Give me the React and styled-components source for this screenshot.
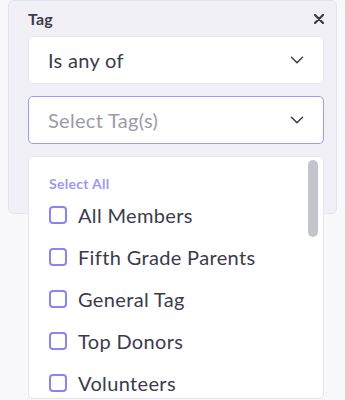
import React from "react";
import styled, { createGlobalStyle } from "styled-components";

const GlobalStyle = createGlobalStyle`
  body {
    margin: 0;
    background: #f8f8fb;
    font-family: Lato, "Open Sans", sans-serif;
  }
`;

const Page = styled.div`
  position: relative;
  height: 400px;
  padding: 0 8px;
  overflow: hidden;
`;

const Panel = styled.div`
  height: 214px;
  box-sizing: border-box;
  background: #f0f0f6;
  border: 1px solid #e3e3eb;
  border-radius: 6px;
  padding: 4px 12px 0 19px;
`;

const Header = styled.div`
  display: flex;
  align-items: center;
  justify-content: space-between;
  height: 27px;
  margin-bottom: 4px;
`;

const Title = styled.span`
  font-size: 16px;
  font-weight: 700;
  color: #3c3c4c;
  letter-spacing: 0.2px;
`;

const Close = styled.button`
  border: none;
  background: none;
  padding: 0;
  display: flex;
  color: #3a3a48;
  cursor: pointer;
`;

const Select = styled.div`
  display: flex;
  align-items: center;
  justify-content: space-between;
  height: 48px;
  box-sizing: border-box;
  width: 296px;
  margin-bottom: 12px;
  padding: 0 19px;
  background: #fff;
  border: ${(p) => (p.$focused ? "1.5px solid #9d99f6" : "1px solid #e5e5ed")};
  border-radius: 5px;
  font-size: 20px;
  letter-spacing: 0.3px;
  color: ${(p) => (p.$placeholder ? "#9b9ba6" : "#3b3b4b")};
`;

const Menu = styled.div`
  position: absolute;
  top: 156px;
  left: 28px;
  width: 296px;
  height: 243px;
  box-sizing: border-box;
  background: #fff;
  border: 1px solid #e5e5ed;
  border-radius: 5px;
  padding: 17px 0 0 20px;
`;

const Thumb = styled.div`
  position: absolute;
  top: 3px;
  right: 5px;
  width: 10px;
  height: 77px;
  border-radius: 5px;
  background: #c4c4cc;
`;

const SelectAll = styled.div`
  font-size: 14px;
  font-weight: 700;
  color: #9a97f4;
  letter-spacing: 0.3px;
  line-height: 20px;
`;

const Option = styled.label`
  display: flex;
  align-items: center;
  gap: 11px;
  height: 42px;
  font-size: 20px;
  letter-spacing: 0.35px;
  color: #3b3b4b;
`;

const Box = styled.span`
  width: 18px;
  height: 18px;
  box-sizing: border-box;
  border: 2px solid #8784f6;
  border-radius: 4px;
  flex-shrink: 0;
`;

const Chevron = () => (
  <svg width="14" height="8" viewBox="0 0 14 8" fill="none">
    <path d="M1.5 1.2l5.5 5.5 5.5-5.5" stroke="#3b3b4b" strokeWidth="1.5" strokeLinecap="round" strokeLinejoin="round" />
  </svg>
);

const CloseIcon = () => (
  <svg width="10" height="10" viewBox="0 0 10 10">
    <path d="M1 1l8 8M9 1l-8 8" stroke="currentColor" strokeWidth="2.2" strokeLinecap="round" />
  </svg>
);

const tags = ["All Members", "Fifth Grade Parents", "General Tag", "Top Donors", "Volunteers"];

export default function App() {
  return (
    <>
      <GlobalStyle />
      <Page>
        <Panel>
          <Header>
            <Title>Tag</Title>
            <Close aria-label="Remove filter">
              <CloseIcon />
            </Close>
          </Header>
          <Select>
            <span>Is any of</span>
            <Chevron />
          </Select>
          <Select $focused $placeholder>
            <span>Select Tag(s)</span>
            <Chevron />
          </Select>
        </Panel>
        <Menu>
          <Thumb />
          <SelectAll>Select All</SelectAll>
          {tags.map((t) => (
            <Option key={t}>
              <Box />
              {t}
            </Option>
          ))}
        </Menu>
      </Page>
    </>
  );
}
